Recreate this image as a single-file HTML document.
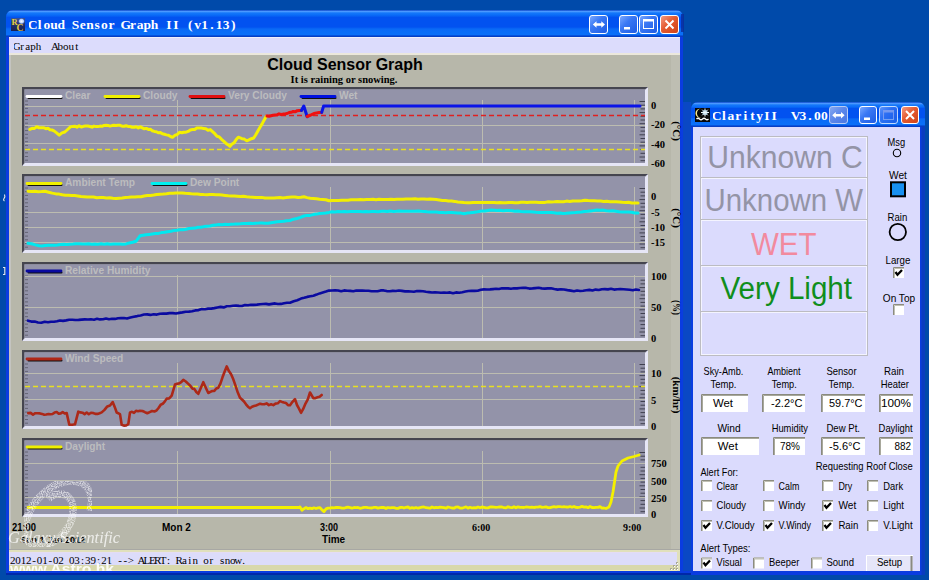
<!DOCTYPE html>
<html><head><meta charset="utf-8">
<style>
*{margin:0;padding:0;box-sizing:border-box}
html,body{width:929px;height:580px;overflow:hidden;background:#004AAA;font-family:"Liberation Sans",sans-serif}
.abs{position:absolute}
.win{position:absolute;background:#1158E6;border-radius:7px 7px 0 0}
.tb{position:absolute;border-radius:7px 7px 0 0;
 background:linear-gradient(to bottom,#1048C8 0px,#4A98FF 1.5px,#1478FA 3px,#0A6CF8 5px,#0252F0 7.5px,#0252F0 17px,#0A6AF6 19px,#0A70F8 24.5px,#0444D0 26px,#0838B8 27px)}
.tb2{background:linear-gradient(to bottom,#1048C8 0px,#4A98FF 1.5px,#1478FA 3px,#0A6CF8 5px,#0252F0 6.5px,#0252F0 15.5px,#0A6AF6 17px,#0A70F8 22.5px,#0444D0 24px,#0838B8 25px)}
.ttl{position:absolute;color:#fff;font-family:"Liberation Mono",monospace;font-weight:bold;white-space:pre;text-shadow:none}
.btn{position:absolute;width:19px;height:19px;border:1px solid #fff;border-radius:3px;
 background:linear-gradient(135deg,#7AA8FF 0%,#3A78F4 40%,#1E5CE4 100%)}
.btn.x{background:linear-gradient(135deg,#F49A82 0%,#E45A30 45%,#D04418 100%)}
.btn svg{position:absolute;left:0;top:0}
.lbl{position:absolute;font-size:11px;color:#000;white-space:pre;line-height:12px}
.fld{position:absolute;background:#fff;border-top:2px solid #8A8A80;border-left:2px solid #8A8A80;border-right:1px solid #F0F0F0;border-bottom:1px solid #F0F0F0;font-size:12px;line-height:15px;text-align:center;color:#000;white-space:pre}
.cb{position:absolute;width:11px;height:11px;background:#fff;border-top:2px solid #8E8E86;border-left:2px solid #8E8E86}
.cb.on::after{content:"";position:absolute;left:1px;top:0px;width:6px;height:3px;border-left:2px solid #000;border-bottom:2px solid #000;transform:rotate(-50deg);transform-origin:center}
.big{position:absolute;left:701px;width:167px;text-align:center;font-size:29px;white-space:pre}
</style></head><body>

<!-- Main window -->
<div class="win" style="left:6px;top:10px;width:677px;height:565px;background:linear-gradient(to bottom,#0A3CE0 0,#0A3CE0 563px,#0028A8 563px)"></div>
<div class="tb" style="left:6px;top:10px;width:677px;height:27px"></div>
<svg class="abs" style="left:11px;top:17.5px" width="14" height="13"><defs><linearGradient id="rcg" x1="0" y1="0" x2="0" y2="1"><stop offset="0" stop-color="#3A5498"/><stop offset="0.5" stop-color="#22306A"/><stop offset="1" stop-color="#1A2050"/></linearGradient><radialGradient id="rcw" cx="0.5" cy="0.5" r="0.5"><stop offset="0" stop-color="#FFFFFF"/><stop offset="0.6" stop-color="#B8D0FF"/><stop offset="1" stop-color="#5070C0" stop-opacity="0"/></radialGradient></defs><rect width="14" height="13" fill="url(#rcg)"/><rect x="7" y="0" width="7" height="6.5" fill="url(#rcw)"/><text x="0.5" y="7" font-family="Liberation Serif" font-weight="bold" font-size="8.5" fill="#E8D040">R</text><text x="5.5" y="12.8" font-family="Liberation Serif" font-weight="bold" font-size="9.5" fill="#E8D040">C</text></svg>
<svg class="abs" style="left:28.5px;top:14px" width="230" height="20"><text x="3.58 10.75 17.93 25.09 32.27 39.44 46.60 53.77 60.95 68.11 75.28 82.45 89.62 96.79 103.96 111.13 118.30 125.47 132.65 139.81 146.99 154.16 161.33 168.50 175.66 182.84 190.00 197.18 204.34" y="15" text-anchor="middle" xml:space="preserve" style="white-space:pre" font-family="Liberation Serif" font-weight="bold" font-size="13.5" fill="#fff">Cloud Sensor Graph II (v1.13)</text></svg>
<div class="btn" style="left:589px;top:15px"><svg width="17" height="17"><path d="M2.8 8.5 L6.5 5.3 V7.3 H11.3 V5.3 L15 8.5 L11.3 11.7 V9.7 H6.5 V11.7 Z" fill="#fff"/></svg></div>
<div class="btn" style="left:619px;top:15px"><svg width="17" height="17"><rect x="4" y="11" width="6" height="2.5" fill="#fff"/></svg></div>
<div class="btn" style="left:639px;top:15px"><svg width="17" height="17"><rect x="3.5" y="3.5" width="10" height="9" fill="none" stroke="#fff" stroke-width="1"/><rect x="3" y="3" width="11" height="2.5" fill="#fff"/></svg></div>
<div class="btn x" style="left:660px;top:15px"><svg width="17" height="17"><path d="M4.5 4.5 L12.5 12.5 M12.5 4.5 L4.5 12.5" stroke="#fff" stroke-width="2"/></svg></div>
<div class="abs" style="left:9px;top:37px;width:671px;height:534px;background:linear-gradient(to right,#C4C4C0 0,#C4C4C0 2px,#B7B7AA 2px,#B7B7AA 662px,#BEBEB2 662px)"></div>
<div class="abs" style="left:9px;top:37px;width:671px;height:18px;background:linear-gradient(to bottom,#F0F0FA 0,#F0F0FA 1px,#DCDCFC 1px,#DCDCFC 16.5px,#ECE8DC 16.5px)"></div>
<svg class="abs" style="left:13.5px;top:38px" width="80" height="16"><text x="2.73 8.18 13.62 19.08 24.53 29.98 35.43 40.88 46.33 51.78 57.23 62.68" y="11.5" text-anchor="middle" xml:space="preserve" style="white-space:pre" font-family="Liberation Serif" font-size="11" fill="#000">Graph  About</text></svg>
<div class="abs" style="left:9px;top:549px;width:671px;height:22px;background:linear-gradient(to bottom,#A8A8A4 0,#A8A8A4 1px,#E0E0BC 1px,#E0E0BC 3px,#ECDCF0 3px,#DCDCFA 4px,#DCDCFA 16px,#D8D8AC 16px,#D8D8AC 21px,#F0ECB4 21px)"></div>
<svg class="abs" style="left:10px;top:552px" width="260" height="16"><text x="2.69 8.05 13.43 18.79 24.16 29.54 34.91 40.28 45.65 51.02 56.39 61.76 67.12 72.50 77.87 83.23 88.61 93.98 99.34 104.72 110.09 115.45 120.83 126.20 131.56 136.94 142.31 147.68 153.05 158.41 163.78 169.16 174.53 179.90 185.27 190.64 196.00 201.38 206.75 212.12 217.49 222.86 228.22 233.59" y="11.7" text-anchor="middle" xml:space="preserve" style="white-space:pre" font-family="Liberation Serif" font-size="11" fill="#000">2012-01-02 03:39:21 --&gt; ALERT: Rain or snow.</text></svg>

<div class="abs" style="left:681px;top:14px;width:3px;height:18px;background:#0A2C98;opacity:.8"></div>
<div class="abs" style="left:677px;top:552px;width:3px;height:19px;background:#E0E0BC"></div>
<svg class="abs" style="left:0;top:0" width="929" height="580">
<rect x="22" y="87" width="626" height="79" fill="#9393A9"/>
<rect x="22" y="163" width="626" height="3" fill="#E6E6F6"/>
<rect x="645" y="87" width="3" height="79" fill="#E6E6F6"/>
<polygon points="22,87 648,87 645,90 25,90 25,163 22,166" fill="#A4A4B8"/>
<polygon points="22,87 648,87 645,89.3 24.3,89.3 24.3,163 22,166" fill="#45454F"/>
<line x1="177.5" y1="100" x2="177.5" y2="163" stroke="#BCBCB0" stroke-width="1"/>
<line x1="330.5" y1="100" x2="330.5" y2="163" stroke="#BCBCB0" stroke-width="1"/>
<line x1="482.5" y1="100" x2="482.5" y2="163" stroke="#BCBCB0" stroke-width="1"/>
<line x1="634.5" y1="100" x2="634.5" y2="163" stroke="#BCBCB0" stroke-width="1"/>
<line x1="25" y1="101.0" x2="28" y2="101.0" stroke="#585866" stroke-width="0.8"/>
<line x1="25" y1="104.7" x2="28" y2="104.7" stroke="#585866" stroke-width="0.8"/>
<line x1="25" y1="108.4" x2="28" y2="108.4" stroke="#585866" stroke-width="0.8"/>
<line x1="25" y1="112.1" x2="28" y2="112.1" stroke="#585866" stroke-width="0.8"/>
<line x1="25" y1="115.8" x2="28" y2="115.8" stroke="#585866" stroke-width="0.8"/>
<line x1="25" y1="119.5" x2="28" y2="119.5" stroke="#585866" stroke-width="0.8"/>
<line x1="25" y1="123.2" x2="28" y2="123.2" stroke="#585866" stroke-width="0.8"/>
<line x1="25" y1="126.9" x2="28" y2="126.9" stroke="#585866" stroke-width="0.8"/>
<line x1="25" y1="130.6" x2="28" y2="130.6" stroke="#585866" stroke-width="0.8"/>
<line x1="25" y1="134.3" x2="28" y2="134.3" stroke="#585866" stroke-width="0.8"/>
<line x1="25" y1="138.0" x2="28" y2="138.0" stroke="#585866" stroke-width="0.8"/>
<line x1="25" y1="141.7" x2="28" y2="141.7" stroke="#585866" stroke-width="0.8"/>
<line x1="25" y1="145.4" x2="28" y2="145.4" stroke="#585866" stroke-width="0.8"/>
<line x1="25" y1="149.1" x2="28" y2="149.1" stroke="#585866" stroke-width="0.8"/>
<line x1="25" y1="152.8" x2="28" y2="152.8" stroke="#585866" stroke-width="0.8"/>
<line x1="25" y1="156.5" x2="28" y2="156.5" stroke="#585866" stroke-width="0.8"/>
<line x1="25" y1="160.2" x2="28" y2="160.2" stroke="#585866" stroke-width="0.8"/>
<line x1="639.5" y1="101.5" x2="645" y2="101.5" stroke="#404050" stroke-width="1"/>
<line x1="640.5" y1="105.2" x2="645" y2="105.2" stroke="#404050" stroke-width="1"/>
<line x1="640.5" y1="108.9" x2="645" y2="108.9" stroke="#404050" stroke-width="1"/>
<line x1="639.5" y1="112.6" x2="645" y2="112.6" stroke="#404050" stroke-width="1"/>
<line x1="640.5" y1="116.3" x2="645" y2="116.3" stroke="#404050" stroke-width="1"/>
<line x1="640.5" y1="120.0" x2="645" y2="120.0" stroke="#404050" stroke-width="1"/>
<line x1="639.5" y1="123.7" x2="645" y2="123.7" stroke="#404050" stroke-width="1"/>
<line x1="640.5" y1="127.4" x2="645" y2="127.4" stroke="#404050" stroke-width="1"/>
<line x1="640.5" y1="131.1" x2="645" y2="131.1" stroke="#404050" stroke-width="1"/>
<line x1="639.5" y1="134.8" x2="645" y2="134.8" stroke="#404050" stroke-width="1"/>
<line x1="640.5" y1="138.5" x2="645" y2="138.5" stroke="#404050" stroke-width="1"/>
<line x1="640.5" y1="142.2" x2="645" y2="142.2" stroke="#404050" stroke-width="1"/>
<line x1="639.5" y1="145.9" x2="645" y2="145.9" stroke="#404050" stroke-width="1"/>
<line x1="640.5" y1="149.6" x2="645" y2="149.6" stroke="#404050" stroke-width="1"/>
<line x1="640.5" y1="153.3" x2="645" y2="153.3" stroke="#404050" stroke-width="1"/>
<line x1="639.5" y1="157.0" x2="645" y2="157.0" stroke="#404050" stroke-width="1"/>
<line x1="640.5" y1="160.7" x2="645" y2="160.7" stroke="#404050" stroke-width="1"/>
<rect x="22" y="174" width="626" height="79" fill="#9393A9"/>
<rect x="22" y="250" width="626" height="3" fill="#E6E6F6"/>
<rect x="645" y="174" width="3" height="79" fill="#E6E6F6"/>
<polygon points="22,174 648,174 645,177 25,177 25,250 22,253" fill="#A4A4B8"/>
<polygon points="22,174 648,174 645,176.3 24.3,176.3 24.3,250 22,253" fill="#45454F"/>
<line x1="177.5" y1="187" x2="177.5" y2="250" stroke="#BCBCB0" stroke-width="1"/>
<line x1="330.5" y1="187" x2="330.5" y2="250" stroke="#BCBCB0" stroke-width="1"/>
<line x1="482.5" y1="187" x2="482.5" y2="250" stroke="#BCBCB0" stroke-width="1"/>
<line x1="634.5" y1="187" x2="634.5" y2="250" stroke="#BCBCB0" stroke-width="1"/>
<line x1="25" y1="188.0" x2="28" y2="188.0" stroke="#585866" stroke-width="0.8"/>
<line x1="25" y1="191.7" x2="28" y2="191.7" stroke="#585866" stroke-width="0.8"/>
<line x1="25" y1="195.4" x2="28" y2="195.4" stroke="#585866" stroke-width="0.8"/>
<line x1="25" y1="199.1" x2="28" y2="199.1" stroke="#585866" stroke-width="0.8"/>
<line x1="25" y1="202.8" x2="28" y2="202.8" stroke="#585866" stroke-width="0.8"/>
<line x1="25" y1="206.5" x2="28" y2="206.5" stroke="#585866" stroke-width="0.8"/>
<line x1="25" y1="210.2" x2="28" y2="210.2" stroke="#585866" stroke-width="0.8"/>
<line x1="25" y1="213.9" x2="28" y2="213.9" stroke="#585866" stroke-width="0.8"/>
<line x1="25" y1="217.6" x2="28" y2="217.6" stroke="#585866" stroke-width="0.8"/>
<line x1="25" y1="221.3" x2="28" y2="221.3" stroke="#585866" stroke-width="0.8"/>
<line x1="25" y1="225.0" x2="28" y2="225.0" stroke="#585866" stroke-width="0.8"/>
<line x1="25" y1="228.7" x2="28" y2="228.7" stroke="#585866" stroke-width="0.8"/>
<line x1="25" y1="232.4" x2="28" y2="232.4" stroke="#585866" stroke-width="0.8"/>
<line x1="25" y1="236.1" x2="28" y2="236.1" stroke="#585866" stroke-width="0.8"/>
<line x1="25" y1="239.8" x2="28" y2="239.8" stroke="#585866" stroke-width="0.8"/>
<line x1="25" y1="243.5" x2="28" y2="243.5" stroke="#585866" stroke-width="0.8"/>
<line x1="25" y1="247.2" x2="28" y2="247.2" stroke="#585866" stroke-width="0.8"/>
<line x1="639.5" y1="188.5" x2="645" y2="188.5" stroke="#404050" stroke-width="1"/>
<line x1="640.5" y1="192.2" x2="645" y2="192.2" stroke="#404050" stroke-width="1"/>
<line x1="640.5" y1="195.9" x2="645" y2="195.9" stroke="#404050" stroke-width="1"/>
<line x1="639.5" y1="199.6" x2="645" y2="199.6" stroke="#404050" stroke-width="1"/>
<line x1="640.5" y1="203.3" x2="645" y2="203.3" stroke="#404050" stroke-width="1"/>
<line x1="640.5" y1="207.0" x2="645" y2="207.0" stroke="#404050" stroke-width="1"/>
<line x1="639.5" y1="210.7" x2="645" y2="210.7" stroke="#404050" stroke-width="1"/>
<line x1="640.5" y1="214.4" x2="645" y2="214.4" stroke="#404050" stroke-width="1"/>
<line x1="640.5" y1="218.1" x2="645" y2="218.1" stroke="#404050" stroke-width="1"/>
<line x1="639.5" y1="221.8" x2="645" y2="221.8" stroke="#404050" stroke-width="1"/>
<line x1="640.5" y1="225.5" x2="645" y2="225.5" stroke="#404050" stroke-width="1"/>
<line x1="640.5" y1="229.2" x2="645" y2="229.2" stroke="#404050" stroke-width="1"/>
<line x1="639.5" y1="232.9" x2="645" y2="232.9" stroke="#404050" stroke-width="1"/>
<line x1="640.5" y1="236.6" x2="645" y2="236.6" stroke="#404050" stroke-width="1"/>
<line x1="640.5" y1="240.3" x2="645" y2="240.3" stroke="#404050" stroke-width="1"/>
<line x1="639.5" y1="244.0" x2="645" y2="244.0" stroke="#404050" stroke-width="1"/>
<line x1="640.5" y1="247.7" x2="645" y2="247.7" stroke="#404050" stroke-width="1"/>
<rect x="22" y="262" width="626" height="79" fill="#9393A9"/>
<rect x="22" y="338" width="626" height="3" fill="#E6E6F6"/>
<rect x="645" y="262" width="3" height="79" fill="#E6E6F6"/>
<polygon points="22,262 648,262 645,265 25,265 25,338 22,341" fill="#A4A4B8"/>
<polygon points="22,262 648,262 645,264.3 24.3,264.3 24.3,338 22,341" fill="#45454F"/>
<line x1="177.5" y1="275" x2="177.5" y2="338" stroke="#BCBCB0" stroke-width="1"/>
<line x1="330.5" y1="275" x2="330.5" y2="338" stroke="#BCBCB0" stroke-width="1"/>
<line x1="482.5" y1="275" x2="482.5" y2="338" stroke="#BCBCB0" stroke-width="1"/>
<line x1="634.5" y1="275" x2="634.5" y2="338" stroke="#BCBCB0" stroke-width="1"/>
<line x1="25" y1="276.0" x2="28" y2="276.0" stroke="#585866" stroke-width="0.8"/>
<line x1="25" y1="279.7" x2="28" y2="279.7" stroke="#585866" stroke-width="0.8"/>
<line x1="25" y1="283.4" x2="28" y2="283.4" stroke="#585866" stroke-width="0.8"/>
<line x1="25" y1="287.1" x2="28" y2="287.1" stroke="#585866" stroke-width="0.8"/>
<line x1="25" y1="290.8" x2="28" y2="290.8" stroke="#585866" stroke-width="0.8"/>
<line x1="25" y1="294.5" x2="28" y2="294.5" stroke="#585866" stroke-width="0.8"/>
<line x1="25" y1="298.2" x2="28" y2="298.2" stroke="#585866" stroke-width="0.8"/>
<line x1="25" y1="301.9" x2="28" y2="301.9" stroke="#585866" stroke-width="0.8"/>
<line x1="25" y1="305.6" x2="28" y2="305.6" stroke="#585866" stroke-width="0.8"/>
<line x1="25" y1="309.3" x2="28" y2="309.3" stroke="#585866" stroke-width="0.8"/>
<line x1="25" y1="313.0" x2="28" y2="313.0" stroke="#585866" stroke-width="0.8"/>
<line x1="25" y1="316.7" x2="28" y2="316.7" stroke="#585866" stroke-width="0.8"/>
<line x1="25" y1="320.4" x2="28" y2="320.4" stroke="#585866" stroke-width="0.8"/>
<line x1="25" y1="324.1" x2="28" y2="324.1" stroke="#585866" stroke-width="0.8"/>
<line x1="25" y1="327.8" x2="28" y2="327.8" stroke="#585866" stroke-width="0.8"/>
<line x1="25" y1="331.5" x2="28" y2="331.5" stroke="#585866" stroke-width="0.8"/>
<line x1="25" y1="335.2" x2="28" y2="335.2" stroke="#585866" stroke-width="0.8"/>
<line x1="639.5" y1="276.5" x2="645" y2="276.5" stroke="#404050" stroke-width="1"/>
<line x1="640.5" y1="280.2" x2="645" y2="280.2" stroke="#404050" stroke-width="1"/>
<line x1="640.5" y1="283.9" x2="645" y2="283.9" stroke="#404050" stroke-width="1"/>
<line x1="639.5" y1="287.6" x2="645" y2="287.6" stroke="#404050" stroke-width="1"/>
<line x1="640.5" y1="291.3" x2="645" y2="291.3" stroke="#404050" stroke-width="1"/>
<line x1="640.5" y1="295.0" x2="645" y2="295.0" stroke="#404050" stroke-width="1"/>
<line x1="639.5" y1="298.7" x2="645" y2="298.7" stroke="#404050" stroke-width="1"/>
<line x1="640.5" y1="302.4" x2="645" y2="302.4" stroke="#404050" stroke-width="1"/>
<line x1="640.5" y1="306.1" x2="645" y2="306.1" stroke="#404050" stroke-width="1"/>
<line x1="639.5" y1="309.8" x2="645" y2="309.8" stroke="#404050" stroke-width="1"/>
<line x1="640.5" y1="313.5" x2="645" y2="313.5" stroke="#404050" stroke-width="1"/>
<line x1="640.5" y1="317.2" x2="645" y2="317.2" stroke="#404050" stroke-width="1"/>
<line x1="639.5" y1="320.9" x2="645" y2="320.9" stroke="#404050" stroke-width="1"/>
<line x1="640.5" y1="324.6" x2="645" y2="324.6" stroke="#404050" stroke-width="1"/>
<line x1="640.5" y1="328.3" x2="645" y2="328.3" stroke="#404050" stroke-width="1"/>
<line x1="639.5" y1="332.0" x2="645" y2="332.0" stroke="#404050" stroke-width="1"/>
<line x1="640.5" y1="335.7" x2="645" y2="335.7" stroke="#404050" stroke-width="1"/>
<rect x="22" y="350" width="626" height="79" fill="#9393A9"/>
<rect x="22" y="426" width="626" height="3" fill="#E6E6F6"/>
<rect x="645" y="350" width="3" height="79" fill="#E6E6F6"/>
<polygon points="22,350 648,350 645,353 25,353 25,426 22,429" fill="#A4A4B8"/>
<polygon points="22,350 648,350 645,352.3 24.3,352.3 24.3,426 22,429" fill="#45454F"/>
<line x1="177.5" y1="363" x2="177.5" y2="426" stroke="#BCBCB0" stroke-width="1"/>
<line x1="330.5" y1="363" x2="330.5" y2="426" stroke="#BCBCB0" stroke-width="1"/>
<line x1="482.5" y1="363" x2="482.5" y2="426" stroke="#BCBCB0" stroke-width="1"/>
<line x1="634.5" y1="363" x2="634.5" y2="426" stroke="#BCBCB0" stroke-width="1"/>
<line x1="25" y1="364.0" x2="28" y2="364.0" stroke="#585866" stroke-width="0.8"/>
<line x1="25" y1="367.7" x2="28" y2="367.7" stroke="#585866" stroke-width="0.8"/>
<line x1="25" y1="371.4" x2="28" y2="371.4" stroke="#585866" stroke-width="0.8"/>
<line x1="25" y1="375.1" x2="28" y2="375.1" stroke="#585866" stroke-width="0.8"/>
<line x1="25" y1="378.8" x2="28" y2="378.8" stroke="#585866" stroke-width="0.8"/>
<line x1="25" y1="382.5" x2="28" y2="382.5" stroke="#585866" stroke-width="0.8"/>
<line x1="25" y1="386.2" x2="28" y2="386.2" stroke="#585866" stroke-width="0.8"/>
<line x1="25" y1="389.9" x2="28" y2="389.9" stroke="#585866" stroke-width="0.8"/>
<line x1="25" y1="393.6" x2="28" y2="393.6" stroke="#585866" stroke-width="0.8"/>
<line x1="25" y1="397.3" x2="28" y2="397.3" stroke="#585866" stroke-width="0.8"/>
<line x1="25" y1="401.0" x2="28" y2="401.0" stroke="#585866" stroke-width="0.8"/>
<line x1="25" y1="404.7" x2="28" y2="404.7" stroke="#585866" stroke-width="0.8"/>
<line x1="25" y1="408.4" x2="28" y2="408.4" stroke="#585866" stroke-width="0.8"/>
<line x1="25" y1="412.1" x2="28" y2="412.1" stroke="#585866" stroke-width="0.8"/>
<line x1="25" y1="415.8" x2="28" y2="415.8" stroke="#585866" stroke-width="0.8"/>
<line x1="25" y1="419.5" x2="28" y2="419.5" stroke="#585866" stroke-width="0.8"/>
<line x1="25" y1="423.2" x2="28" y2="423.2" stroke="#585866" stroke-width="0.8"/>
<line x1="639.5" y1="364.5" x2="645" y2="364.5" stroke="#404050" stroke-width="1"/>
<line x1="640.5" y1="368.2" x2="645" y2="368.2" stroke="#404050" stroke-width="1"/>
<line x1="640.5" y1="371.9" x2="645" y2="371.9" stroke="#404050" stroke-width="1"/>
<line x1="639.5" y1="375.6" x2="645" y2="375.6" stroke="#404050" stroke-width="1"/>
<line x1="640.5" y1="379.3" x2="645" y2="379.3" stroke="#404050" stroke-width="1"/>
<line x1="640.5" y1="383.0" x2="645" y2="383.0" stroke="#404050" stroke-width="1"/>
<line x1="639.5" y1="386.7" x2="645" y2="386.7" stroke="#404050" stroke-width="1"/>
<line x1="640.5" y1="390.4" x2="645" y2="390.4" stroke="#404050" stroke-width="1"/>
<line x1="640.5" y1="394.1" x2="645" y2="394.1" stroke="#404050" stroke-width="1"/>
<line x1="639.5" y1="397.8" x2="645" y2="397.8" stroke="#404050" stroke-width="1"/>
<line x1="640.5" y1="401.5" x2="645" y2="401.5" stroke="#404050" stroke-width="1"/>
<line x1="640.5" y1="405.2" x2="645" y2="405.2" stroke="#404050" stroke-width="1"/>
<line x1="639.5" y1="408.9" x2="645" y2="408.9" stroke="#404050" stroke-width="1"/>
<line x1="640.5" y1="412.6" x2="645" y2="412.6" stroke="#404050" stroke-width="1"/>
<line x1="640.5" y1="416.3" x2="645" y2="416.3" stroke="#404050" stroke-width="1"/>
<line x1="639.5" y1="420.0" x2="645" y2="420.0" stroke="#404050" stroke-width="1"/>
<line x1="640.5" y1="423.7" x2="645" y2="423.7" stroke="#404050" stroke-width="1"/>
<rect x="22" y="438" width="626" height="79" fill="#9393A9"/>
<rect x="22" y="514" width="626" height="3" fill="#E6E6F6"/>
<rect x="645" y="438" width="3" height="79" fill="#E6E6F6"/>
<polygon points="22,438 648,438 645,441 25,441 25,514 22,517" fill="#A4A4B8"/>
<polygon points="22,438 648,438 645,440.3 24.3,440.3 24.3,514 22,517" fill="#45454F"/>
<line x1="177.5" y1="451" x2="177.5" y2="514" stroke="#BCBCB0" stroke-width="1"/>
<line x1="330.5" y1="451" x2="330.5" y2="514" stroke="#BCBCB0" stroke-width="1"/>
<line x1="482.5" y1="451" x2="482.5" y2="514" stroke="#BCBCB0" stroke-width="1"/>
<line x1="634.5" y1="451" x2="634.5" y2="514" stroke="#BCBCB0" stroke-width="1"/>
<line x1="25" y1="452.0" x2="28" y2="452.0" stroke="#585866" stroke-width="0.8"/>
<line x1="25" y1="455.7" x2="28" y2="455.7" stroke="#585866" stroke-width="0.8"/>
<line x1="25" y1="459.4" x2="28" y2="459.4" stroke="#585866" stroke-width="0.8"/>
<line x1="25" y1="463.1" x2="28" y2="463.1" stroke="#585866" stroke-width="0.8"/>
<line x1="25" y1="466.8" x2="28" y2="466.8" stroke="#585866" stroke-width="0.8"/>
<line x1="25" y1="470.5" x2="28" y2="470.5" stroke="#585866" stroke-width="0.8"/>
<line x1="25" y1="474.2" x2="28" y2="474.2" stroke="#585866" stroke-width="0.8"/>
<line x1="25" y1="477.9" x2="28" y2="477.9" stroke="#585866" stroke-width="0.8"/>
<line x1="25" y1="481.6" x2="28" y2="481.6" stroke="#585866" stroke-width="0.8"/>
<line x1="25" y1="485.3" x2="28" y2="485.3" stroke="#585866" stroke-width="0.8"/>
<line x1="25" y1="489.0" x2="28" y2="489.0" stroke="#585866" stroke-width="0.8"/>
<line x1="25" y1="492.7" x2="28" y2="492.7" stroke="#585866" stroke-width="0.8"/>
<line x1="25" y1="496.4" x2="28" y2="496.4" stroke="#585866" stroke-width="0.8"/>
<line x1="25" y1="500.1" x2="28" y2="500.1" stroke="#585866" stroke-width="0.8"/>
<line x1="25" y1="503.8" x2="28" y2="503.8" stroke="#585866" stroke-width="0.8"/>
<line x1="25" y1="507.5" x2="28" y2="507.5" stroke="#585866" stroke-width="0.8"/>
<line x1="25" y1="511.2" x2="28" y2="511.2" stroke="#585866" stroke-width="0.8"/>
<line x1="639.5" y1="452.5" x2="645" y2="452.5" stroke="#404050" stroke-width="1"/>
<line x1="640.5" y1="456.2" x2="645" y2="456.2" stroke="#404050" stroke-width="1"/>
<line x1="640.5" y1="459.9" x2="645" y2="459.9" stroke="#404050" stroke-width="1"/>
<line x1="639.5" y1="463.6" x2="645" y2="463.6" stroke="#404050" stroke-width="1"/>
<line x1="640.5" y1="467.3" x2="645" y2="467.3" stroke="#404050" stroke-width="1"/>
<line x1="640.5" y1="471.0" x2="645" y2="471.0" stroke="#404050" stroke-width="1"/>
<line x1="639.5" y1="474.7" x2="645" y2="474.7" stroke="#404050" stroke-width="1"/>
<line x1="640.5" y1="478.4" x2="645" y2="478.4" stroke="#404050" stroke-width="1"/>
<line x1="640.5" y1="482.1" x2="645" y2="482.1" stroke="#404050" stroke-width="1"/>
<line x1="639.5" y1="485.8" x2="645" y2="485.8" stroke="#404050" stroke-width="1"/>
<line x1="640.5" y1="489.5" x2="645" y2="489.5" stroke="#404050" stroke-width="1"/>
<line x1="640.5" y1="493.2" x2="645" y2="493.2" stroke="#404050" stroke-width="1"/>
<line x1="639.5" y1="496.9" x2="645" y2="496.9" stroke="#404050" stroke-width="1"/>
<line x1="640.5" y1="500.6" x2="645" y2="500.6" stroke="#404050" stroke-width="1"/>
<line x1="640.5" y1="504.3" x2="645" y2="504.3" stroke="#404050" stroke-width="1"/>
<line x1="639.5" y1="508.0" x2="645" y2="508.0" stroke="#404050" stroke-width="1"/>
<line x1="640.5" y1="511.7" x2="645" y2="511.7" stroke="#404050" stroke-width="1"/>
<line x1="25" y1="106.5" x2="645" y2="106.5" stroke="#BCBCB0" stroke-width="1"/>
<line x1="25" y1="125.5" x2="645" y2="125.5" stroke="#BCBCB0" stroke-width="1"/>
<line x1="25" y1="143.5" x2="645" y2="143.5" stroke="#BCBCB0" stroke-width="1"/>
<line x1="25" y1="115.5" x2="645" y2="115.5" stroke="#E02020" stroke-width="1.6" stroke-dasharray="5 3"/>
<line x1="25" y1="149.5" x2="645" y2="149.5" stroke="#E8E020" stroke-width="1.6" stroke-dasharray="5 3"/>
<line x1="28.5" y1="98.1" x2="61.5" y2="98.1" stroke="#111" stroke-width="2" stroke-linecap="round"/>
<line x1="27" y1="96.5" x2="61" y2="96.5" stroke="#FFFFFF" stroke-width="2.8" stroke-linecap="round"/>
<text x="65" y="99.3" font-family="Liberation Sans" font-weight="bold" font-size="10.2" fill="#BCBCBE">Clear</text>
<line x1="106.5" y1="98.1" x2="139.5" y2="98.1" stroke="#111" stroke-width="2" stroke-linecap="round"/>
<line x1="105" y1="96.5" x2="139" y2="96.5" stroke="#F0F000" stroke-width="2.8" stroke-linecap="round"/>
<text x="143" y="99.3" font-family="Liberation Sans" font-weight="bold" font-size="10.2" fill="#BCBCBE">Cloudy</text>
<line x1="191.5" y1="98.1" x2="224.5" y2="98.1" stroke="#111" stroke-width="2" stroke-linecap="round"/>
<line x1="190" y1="96.5" x2="224" y2="96.5" stroke="#E01010" stroke-width="2.8" stroke-linecap="round"/>
<text x="228" y="99.3" font-family="Liberation Sans" font-weight="bold" font-size="10.2" fill="#BCBCBE">Very Cloudy</text>
<line x1="302.5" y1="98.1" x2="335.5" y2="98.1" stroke="#111" stroke-width="2" stroke-linecap="round"/>
<line x1="301" y1="96.5" x2="335" y2="96.5" stroke="#0010E0" stroke-width="2.8" stroke-linecap="round"/>
<text x="339" y="99.3" font-family="Liberation Sans" font-weight="bold" font-size="10.2" fill="#BCBCBE">Wet</text>
<polyline points="29.8,129.3 32.1,128.3 34.5,128.4 36.8,126.7 39.0,127.8 41.3,127.8 43.5,127.7 45.8,128.7 48.0,128.3 50.0,129.7 52.0,130.0 54.0,130.8 56.6,132.9 59.2,135.1 62.0,132.9 64.8,132.0 67.6,129.5 70.4,126.9 72.6,126.4 74.8,126.2 76.9,127.2 79.1,125.7 81.3,127.1 83.5,126.3 85.6,126.1 87.8,126.1 90.0,126.5 92.0,127.2 94.0,126.1 96.0,126.6 98.0,126.6 100.0,126.1 102.0,126.3 104.0,125.4 106.0,125.3 108.0,125.4 110.0,126.1 112.0,125.6 114.0,125.3 116.0,125.6 118.0,125.3 120.0,125.3 122.1,126.2 124.1,126.3 126.1,125.7 128.1,126.4 130.2,126.5 132.2,127.3 134.2,127.2 136.2,126.7 138.3,128.0 140.3,126.8 142.3,127.8 144.3,128.8 146.3,128.4 148.3,129.4 150.3,129.2 152.3,130.8 154.3,131.4 156.3,131.7 158.3,132.8 160.4,132.6 162.4,133.8 164.4,134.3 166.4,134.9 168.5,135.3 170.5,136.5 172.5,137.3 174.8,135.4 177.2,134.5 179.5,132.3 181.7,132.8 183.8,132.2 186.0,132.2 188.2,131.4 190.3,130.0 192.5,129.6 194.7,129.5 196.8,128.0 199.0,128.1 201.3,128.1 203.5,128.4 205.8,128.7 208.0,130.2 210.3,129.6 212.5,131.6 214.8,133.7 217.0,136.3 219.3,136.9 221.5,139.3 223.6,141.1 225.8,143.2 227.9,144.7 230.0,146.4 232.0,144.0 234.0,142.9 236.2,139.6 238.3,137.2 242.0,138.7 244.3,139.1 246.7,140.8 249.0,139.8 251.4,138.7 253.7,138.0 255.8,134.8 257.9,131.0 260.0,127.2 262.1,123.9 264.2,119.9 266.3,116.2" fill="none" stroke="#F4F000" stroke-width="3" stroke-linejoin="round" stroke-linecap="round"/>
<polyline points="267.0,116.1 269.0,116.3 271.0,115.7 273.0,115.2 275.0,115.0 277.0,114.8 279.0,113.8 281.0,114.5 283.0,114.1 285.0,113.9 287.1,113.5 289.1,112.6 291.1,112.3 293.2,111.5 295.2,111.8 297.3,110.7 299.3,110.4 301.4,110.5" fill="none" stroke="#F01010" stroke-width="3" stroke-linejoin="round" stroke-linecap="round"/>
<polyline points="301.4,110.5 303.8,106 307.2,116.8" fill="none" stroke="#0A14E8" stroke-width="3" stroke-linejoin="round" stroke-linecap="round"/>
<polyline points="307.2,116.5 309.5,115.5 311.7,114.7 314.0,113.5 316.6,112.9 319.1,112.5 321.7,112.4" fill="none" stroke="#F01010" stroke-width="3" stroke-linejoin="round" stroke-linecap="round"/>
<polyline points="321.7,112.4 323.6,106 640,106" fill="none" stroke="#0A14E8" stroke-width="3" stroke-linejoin="round" stroke-linecap="round"/>
<text x="651" y="108.8" font-family="Liberation Serif" font-weight="bold" font-size="10.5" fill="#000">0</text>
<text x="651" y="128" font-family="Liberation Serif" font-weight="bold" font-size="10.5" fill="#000">-20</text>
<text x="651" y="147.5" font-family="Liberation Serif" font-weight="bold" font-size="10.5" fill="#000">-40</text>
<text x="651" y="167" font-family="Liberation Serif" font-weight="bold" font-size="10.5" fill="#000">-60</text>
<text x="0" y="0" transform="translate(672.5,131) rotate(90)" font-family="Liberation Serif" font-weight="bold" font-size="11" fill="#000" text-anchor="middle">(°C)</text>
<line x1="25" y1="212.5" x2="645" y2="212.5" stroke="#BCBCB0" stroke-width="1"/>
<line x1="25" y1="227.5" x2="645" y2="227.5" stroke="#BCBCB0" stroke-width="1"/>
<line x1="25" y1="242.5" x2="645" y2="242.5" stroke="#BCBCB0" stroke-width="1"/>
<line x1="28.5" y1="185.1" x2="61.5" y2="185.1" stroke="#111" stroke-width="2" stroke-linecap="round"/>
<line x1="27" y1="183.5" x2="61" y2="183.5" stroke="#F0F000" stroke-width="2.8" stroke-linecap="round"/>
<text x="65" y="186.3" font-family="Liberation Sans" font-weight="bold" font-size="10.2" fill="#BCBCBE">Ambient Temp</text>
<line x1="153.5" y1="185.1" x2="186.5" y2="185.1" stroke="#111" stroke-width="2" stroke-linecap="round"/>
<line x1="152" y1="183.5" x2="186" y2="183.5" stroke="#00F0F0" stroke-width="2.8" stroke-linecap="round"/>
<text x="190" y="186.3" font-family="Liberation Sans" font-weight="bold" font-size="10.2" fill="#BCBCBE">Dew Point</text>
<polyline points="28.0,191.3 31.4,191.4 34.8,191.2 38.2,191.7 41.6,191.6 45.0,191.3 48.7,192.2 52.3,193.1 56.0,193.9 59.1,194.1 62.2,194.8 65.3,195.2 68.4,195.2 71.6,195.5 74.7,195.6 77.8,195.9 80.9,196.4 84.0,196.7 87.2,197.1 90.4,196.9 93.6,197.0 96.8,197.7 100.0,197.6 103.2,197.5 106.4,197.9 109.6,197.7 112.8,198.2 116.0,198.6 119.1,198.3 122.2,198.0 125.4,197.5 128.5,197.3 131.6,197.0 134.8,197.1 137.9,196.7 141.0,196.7 144.2,196.0 147.3,195.5 150.5,195.4 153.7,195.1 156.8,194.6 160.0,194.2 163.2,194.0 166.4,193.7 169.6,193.2 172.8,193.2 176.0,192.9 179.1,192.9 182.1,193.0 185.2,193.3 188.3,193.4 191.4,193.8 194.4,194.1 197.5,194.0 200.6,194.4 203.6,194.6 206.7,194.7 209.8,194.5 212.9,194.5 215.9,194.7 219.0,194.8 222.1,195.0 225.1,195.4 228.2,195.8 231.2,196.0 234.3,195.9 237.4,196.2 240.4,196.5 243.5,196.3 246.6,196.8 249.6,197.1 252.7,197.2 255.8,197.4 258.8,197.4 261.9,197.4 264.9,198.0 268.0,197.9 271.0,198.1 274.0,198.1 277.0,197.7 280.0,197.6 283.0,197.9 286.0,197.6 289.0,197.2 292.0,197.1 295.0,197.0 298.0,197.4 301.0,197.3 304.0,196.8 307.1,197.6 310.2,198.2 313.4,198.4 316.5,198.7 319.6,199.2 322.8,199.4 325.9,199.8 329.0,200.8 332.2,200.5 335.3,200.4 338.5,200.5 341.6,200.2 344.8,200.3 347.9,200.2 351.1,199.8 354.2,199.7 357.4,199.7 360.5,199.6 363.7,199.7 366.8,199.4 370.0,199.5 373.0,199.3 376.0,199.7 379.0,199.3 382.0,199.4 385.0,199.4 388.0,199.6 391.0,199.3 394.0,199.6 397.0,199.3 400.0,199.3 403.0,199.2 406.0,198.9 409.0,199.1 412.0,199.0 415.0,198.8 418.0,199.3 421.0,198.9 424.0,199.0 427.0,199.2 430.0,199.0 433.1,199.2 436.2,199.6 439.3,200.0 442.4,200.4 445.5,200.4 448.5,200.9 451.6,201.1 454.7,201.4 457.8,202.0 460.9,202.2 464.0,202.5 467.0,202.7 470.0,202.7 473.0,202.5 476.0,202.6 479.0,202.5 482.0,202.5 485.0,202.6 488.0,202.5 491.0,202.5 494.0,202.5 497.0,202.8 500.0,202.6 503.0,202.7 506.0,202.8 509.0,202.4 512.0,202.5 515.0,202.8 518.0,202.7 521.0,202.3 524.0,202.3 527.0,202.5 530.0,202.2 533.0,202.3 536.0,202.2 539.1,202.5 542.1,202.4 545.2,202.4 548.2,201.8 551.3,202.0 554.4,201.8 557.4,201.4 560.5,201.7 563.6,201.7 566.6,201.1 569.7,201.4 572.8,200.9 575.8,200.9 578.9,201.0 581.9,200.8 585.0,200.3 588.1,200.6 591.2,200.8 594.4,200.8 597.5,200.9 600.6,201.1 603.7,201.5 606.8,201.2 609.9,201.7 613.1,201.8 616.2,201.7 619.3,202.0 622.4,202.3 625.5,202.4 628.6,202.3 631.8,203.0 634.9,203.0 638,203" fill="none" stroke="#F2EE00" stroke-width="3" stroke-linejoin="round" stroke-linecap="round"/>
<polyline points="28.0,243.3 31.7,243.8 35.3,244.9 39.0,245.7 42.1,246.0 45.2,245.5 48.3,245.2 51.4,245.2 54.5,245.3 57.5,245.1 60.6,244.6 63.7,244.3 66.8,244.6 69.9,244.2 73.0,244.1 76.1,243.8 79.2,243.7 82.4,244.1 85.5,244.0 88.6,243.7 91.7,244.3 94.8,244.1 97.9,244.2 101.1,243.8 104.2,244.2 107.3,243.7 110.4,244.2 113.5,244.0 116.6,243.9 119.8,244.0 122.9,244.3 126.0,243.9 129.3,242.9 132.7,242.3 136.0,241.3 140.0,235.8 143.1,235.3 146.2,234.8 149.2,234.4 152.3,234.0 155.4,233.6 158.5,233.4 161.5,232.6 164.6,232.3 167.7,231.7 170.8,231.3 173.8,230.6 176.9,230.3 180.0,229.7 183.0,229.7 186.0,229.2 189.0,228.5 192.0,228.3 195.0,228.1 198.0,227.2 201.0,227.2 204.0,226.6 207.0,226.2 210.0,226.0 213.0,225.3 216.0,224.9 219.0,224.6 222.1,224.7 225.1,224.2 228.2,224.4 231.2,224.2 234.3,224.1 237.4,223.9 240.4,223.8 243.5,223.5 246.6,223.4 249.6,223.3 252.7,223.6 255.8,223.2 258.8,223.1 261.9,222.9 264.9,223.3 268.0,223.2 271.1,222.7 274.3,222.2 277.4,221.8 280.6,221.4 283.7,221.2 286.9,220.7 290.0,220.5 293.5,219.2 297.0,218.5 300.5,217.4 304.0,216.0 307.1,215.4 310.2,215.4 313.3,214.6 316.4,214.1 319.6,213.5 322.7,213.3 325.8,212.9 328.9,212.4 332.0,211.8 335.1,212.0 338.1,211.6 341.2,211.7 344.3,211.6 347.4,211.8 350.4,211.5 353.5,211.5 356.6,211.6 359.7,211.5 362.7,211.7 365.8,211.6 368.9,211.7 372.0,211.6 375.0,211.6 378.1,211.7 381.2,211.3 384.3,211.3 387.3,211.6 390.4,211.1 393.5,211.4 396.6,211.3 399.6,210.9 402.7,211.3 405.8,211.3 408.9,211.2 411.9,211.2 415.0,211.2 418.1,210.9 421.1,211.3 424.2,211.5 427.2,211.8 430.3,212.0 433.4,212.1 436.4,212.1 439.5,212.5 442.6,212.5 445.6,212.7 448.7,212.6 451.8,212.6 454.8,212.8 457.9,213.1 460.9,213.1 464.0,213.7 467.0,213.1 470.0,212.8 473.0,212.4 476.0,212.1 479.0,211.5 482.0,210.9 485.0,211.0 488.0,210.5 491.0,210.0 494.0,210.2 497.0,210.4 500.0,210.2 503.0,210.7 506.0,210.6 509.0,210.6 512.0,210.8 515.0,211.3 518.0,211.1 521.0,211.5 524.0,211.8 527.0,211.7 530.0,211.7 533.0,211.9 536.0,212.2 539.0,212.4 542.0,212.5 545.0,212.6 548.0,212.4 551.0,212.6 554.0,212.8 557.0,213.2 560.0,213.1 563.0,213.4 566.0,213.2 569.1,212.9 572.2,212.7 575.3,212.6 578.4,212.3 581.5,212.0 584.5,211.5 587.6,211.3 590.7,210.9 593.8,210.6 596.9,210.1 600.0,210.2 603.2,210.1 606.3,210.8 609.5,211.0 612.7,210.7 615.8,211.2 619.0,211.7 622.2,212.0 625.3,212.0 628.5,212.1 631.7,212.3 634.8,213.0 638,213" fill="none" stroke="#00E8F0" stroke-width="3" stroke-linejoin="round" stroke-linecap="round"/>
<text x="651" y="200" font-family="Liberation Serif" font-weight="bold" font-size="10.5" fill="#000">0</text>
<text x="651" y="215.5" font-family="Liberation Serif" font-weight="bold" font-size="10.5" fill="#000">-5</text>
<text x="651" y="230.5" font-family="Liberation Serif" font-weight="bold" font-size="10.5" fill="#000">-10</text>
<text x="651" y="245.5" font-family="Liberation Serif" font-weight="bold" font-size="10.5" fill="#000">-15</text>
<text x="0" y="0" transform="translate(672.5,218) rotate(90)" font-family="Liberation Serif" font-weight="bold" font-size="11" fill="#000" text-anchor="middle">(°C)</text>
<line x1="25" y1="276.5" x2="645" y2="276.5" stroke="#BCBCB0" stroke-width="1"/>
<line x1="25" y1="307.5" x2="645" y2="307.5" stroke="#BCBCB0" stroke-width="1"/>
<line x1="28.5" y1="272.6" x2="61.5" y2="272.6" stroke="#111" stroke-width="2" stroke-linecap="round"/>
<line x1="27" y1="271" x2="61" y2="271" stroke="#0A0AA0" stroke-width="2.8" stroke-linecap="round"/>
<text x="65" y="273.8" font-family="Liberation Sans" font-weight="bold" font-size="10.2" fill="#BCBCBE">Relative Humidity</text>
<polyline points="28.0,320.7 31.3,321.6 34.7,321.6 38.0,322.5 41.3,322.8 44.7,321.8 48.0,322.3 51.0,321.7 54.0,321.8 57.0,321.3 60.0,320.5 63.0,320.9 66.1,320.4 69.2,319.8 72.3,319.7 75.4,320.0 78.6,319.9 81.7,319.6 84.8,319.4 87.9,319.5 91.0,319.3 94.0,319.7 97.0,318.8 100.0,319.4 103.0,319.3 106.0,318.5 109.0,319.2 112.0,318.8 115.0,318.9 118.0,318.2 121.0,318.1 124.0,318.0 127.0,318.5 130.4,317.5 133.8,316.7 137.2,316.1 140.6,315.4 144.0,314.5 147.2,314.4 150.4,314.9 153.6,314.2 156.8,314.6 160.0,313.7 163.2,313.6 166.4,313.6 169.6,313.1 172.8,313.1 176.0,313.5 179.2,312.9 182.4,312.4 185.7,311.8 188.9,311.6 192.1,311.2 195.3,310.4 198.6,310.1 201.8,309.0 205.0,309.2 208.1,308.6 211.2,308.6 214.3,308.1 217.4,307.5 220.6,306.9 223.7,307.4 226.8,306.3 229.9,306.3 233.0,305.8 236.0,305.6 239.0,305.9 242.0,306.0 245.0,305.1 248.0,305.3 251.0,304.8 254.0,304.9 257.0,304.6 260.0,304.2 263.0,304.0 266.0,303.9 269.0,304.4 272.0,303.9 275.0,303.4 278.0,304.0 281.0,303.9 284.0,303.2 287.0,302.8 290.0,302.7 293.7,301.3 297.3,300.2 301.0,298.6 304.1,297.8 307.2,296.9 310.3,296.3 313.4,295.7 316.6,294.6 319.7,293.4 322.8,292.5 325.9,291.6 329.0,290.6 332.0,290.5 335.1,290.3 338.1,290.5 341.2,291.2 344.2,290.4 347.2,290.8 350.3,290.9 353.3,291.2 356.3,290.5 359.4,290.6 362.4,290.6 365.5,290.7 368.5,290.8 371.5,291.3 374.6,291.2 377.6,291.3 380.7,290.4 383.7,290.4 386.7,291.1 389.8,291.3 392.8,290.9 395.8,291.0 398.9,290.5 401.9,290.9 405.0,291.4 408.0,291.3 411.0,291.5 414.0,291.7 417.0,291.1 420.0,291.1 423.0,291.3 426.0,291.8 429.0,292.1 432.0,292.5 435.0,292.4 438.0,292.5 441.0,292.7 444.0,292.6 447.0,292.8 450.0,292.4 453.0,293.3 456.1,292.4 459.2,292.8 462.3,292.2 465.4,291.5 468.5,291.0 471.5,290.8 474.6,290.9 477.7,290.7 480.8,289.7 483.9,289.4 487.0,289.5 490.0,289.4 493.0,289.1 496.0,288.8 499.0,289.0 502.0,288.3 505.0,288.4 508.0,288.4 511.0,288.8 514.0,288.3 517.0,288.4 520.1,288.0 523.2,287.8 526.3,287.9 529.4,288.6 532.5,288.4 535.5,288.1 538.6,287.8 541.7,288.4 544.8,288.6 547.9,288.4 551.0,288.3 554.3,289.0 557.6,289.6 560.9,289.3 564.1,289.5 567.4,290.1 570.7,290.6 574.0,291.2 577.1,290.5 580.2,291.0 583.2,290.7 586.3,290.3 589.4,289.9 592.5,290.5 595.6,289.6 598.7,290.0 601.8,289.2 604.8,289.1 607.9,289.4 611.0,288.8 614.1,289.6 617.2,289.2 620.3,289.0 623.4,289.2 626.6,289.5 629.7,289.8 632.8,290.2 635.9,289.5 639,290" fill="none" stroke="#0A0AA0" stroke-width="2.6" stroke-linejoin="round" stroke-linecap="round"/>
<text x="651" y="280" font-family="Liberation Serif" font-weight="bold" font-size="10.5" fill="#000">100</text>
<text x="651" y="311" font-family="Liberation Serif" font-weight="bold" font-size="10.5" fill="#000">50</text>
<text x="651" y="342" font-family="Liberation Serif" font-weight="bold" font-size="10.5" fill="#000">0</text>
<text x="-7.5" y="0" transform="translate(673,307.5) rotate(90)" font-family="Liberation Serif" font-weight="bold" font-size="11" fill="#000"  textLength="15" lengthAdjust="spacingAndGlyphs">(%)</text>
<line x1="25" y1="373.5" x2="645" y2="373.5" stroke="#BCBCB0" stroke-width="1"/>
<line x1="25" y1="399.5" x2="645" y2="399.5" stroke="#BCBCB0" stroke-width="1"/>
<line x1="25" y1="386.5" x2="645" y2="386.5" stroke="#E8E020" stroke-width="1.6" stroke-dasharray="5 3"/>
<line x1="28.5" y1="360.6" x2="61.5" y2="360.6" stroke="#111" stroke-width="2" stroke-linecap="round"/>
<line x1="27" y1="359" x2="61" y2="359" stroke="#B02818" stroke-width="2.8" stroke-linecap="round"/>
<text x="65" y="361.8" font-family="Liberation Sans" font-weight="bold" font-size="10.2" fill="#BCBCBE">Wind Speed</text>
<polyline points="28.3,413.1 30.6,412.9 33.0,414.6 35.3,413.2 37.7,413.2 40.0,413.4 42.1,413.9 44.2,414.7 46.3,414.5 48.4,414.0 50.4,414.3 52.5,414.0 54.6,412.6 56.7,412.1 58.7,413.7 60.7,413.4 62.7,412.1 64.7,413.5 66.7,413.1 69.3,424.7 72.2,424.7 75.0,424.3 78.3,411.7 80.4,412.4 82.5,412.7 84.6,414.1 86.7,412.5 88.8,414.2 91.0,412.7 93.1,413.0 95.3,413.9 97.4,413.9 99.6,413.2 101.7,412.4 104.5,409.9 107.3,406.4 110.0,405.5 112.7,402.1 114.7,406.9 116.7,412.5 120.0,414.1 121.7,424.8 123.9,425.6 126.1,425.5 128.3,424.1 130.0,412.4 132.0,411.8 134.0,412.8 136.0,410.8 138.0,411.2 140.0,410.8 142.5,411.0 145.0,412.2 147.3,413.2 149.7,412.1 152.0,411.0 154.4,411.5 156.7,410.3 158.7,407.8 160.7,404.7 162.7,403.8 164.7,401.6 166.7,398.6 169.2,398.4 171.7,395.7 175.0,384.5 177.1,383.7 179.2,383.4 181.2,382.2 183.3,379.8 185.8,381.5 188.3,383.9 190.3,385.8 192.3,388.6 194.3,388.9 196.3,392.0 198.3,393.8 200.8,388.1 203.3,382.2 205.8,387.7 208.3,393.0 210.3,391.9 212.3,391.0 214.3,390.9 216.3,388.5 218.3,387.7 220.4,383.6 222.5,377.3 224.6,371.7 226.7,366.4 228.9,371.1 231.1,374.3 233.3,379.3 235.5,385.7 237.8,392.6 240.0,397.8 242.0,399.5 244.0,401.5 246.0,404.3 248.0,406.7 250.0,408.2 252.0,406.8 254.0,406.1 256.0,405.5 258.0,404.6 260.0,403.8 262.2,404.3 264.4,404.2 266.6,403.4 268.9,405.1 271.1,404.3 273.3,405.1 275.5,403.6 277.8,403.3 280.0,401.1 282.0,401.9 284.0,402.5 286.0,403.0 288.0,405.1 290.0,405.2 292.5,401.8 295.0,399.1 297.0,405.0 299.0,408.6 301.0,412.8 303.2,408.9 305.5,403.6 307.8,399.3 310.0,392.5 313.3,398.2 315.4,398.1 317.5,397.3 319.6,396.7 321.7,395" fill="none" stroke="#AC2818" stroke-width="2.6" stroke-linejoin="round" stroke-linecap="round"/>
<text x="651" y="377" font-family="Liberation Serif" font-weight="bold" font-size="10.5" fill="#000">10</text>
<text x="651" y="403.5" font-family="Liberation Serif" font-weight="bold" font-size="10.5" fill="#000">5</text>
<text x="651" y="430" font-family="Liberation Serif" font-weight="bold" font-size="10.5" fill="#000">0</text>
<text x="0" y="0" transform="translate(672.5,395) rotate(90)" font-family="Liberation Serif" font-weight="bold" font-size="11" fill="#000" text-anchor="middle">(km/hr)</text>
<line x1="25" y1="463.5" x2="645" y2="463.5" stroke="#BCBCB0" stroke-width="1"/>
<line x1="25" y1="480.5" x2="645" y2="480.5" stroke="#BCBCB0" stroke-width="1"/>
<line x1="25" y1="497.5" x2="645" y2="497.5" stroke="#BCBCB0" stroke-width="1"/>
<line x1="28.5" y1="448.6" x2="61.5" y2="448.6" stroke="#111" stroke-width="2" stroke-linecap="round"/>
<line x1="27" y1="447" x2="61" y2="447" stroke="#F0F000" stroke-width="2.8" stroke-linecap="round"/>
<text x="65" y="449.8" font-family="Liberation Sans" font-weight="bold" font-size="10.2" fill="#BCBCBE">Daylight</text>
<polyline points="28,507.5 300,507.5 300.0,506.9 302.0,510.2 304.0,508.7 306.0,507.6 308.0,508.7 310.0,508.1 312.0,508.6 314.0,507.8 316.0,508.5 318.0,507.9 320.0,507.7 322.0,509.9 324.0,511.6 326.0,508.9 328.0,508.1 330.0,508.2 332.0,507.6 334.0,507.8 336.0,507.5 338.0,507.5 340.0,507.6 342.0,508.1 344.0,508.2 346.0,507.5 348.0,507.2 350.0,507.7 352.0,508.2 354.0,507.5 356.0,507.6 358.0,507.5 360.0,508.3 362.0,507.9 364.0,507.3 366.0,507.3 368.0,507.7 370.0,507.9 372.0,508.0 374.0,507.3 376.0,507.4 378.0,508.1 380.0,507.7 382.0,507.5 384.0,507.5 386.0,508.4 388.0,507.5 390.0,507.9 392.0,507.6 394.0,507.6 396.0,508.3 398.0,508.4 400.0,507.5 402.0,507.3 404.0,508.0 406.0,507.3 408.0,507.0 410.0,508.3 412.0,507.6 414.0,508.1 416.0,507.5 418.0,508.2 420.0,507.6 422.0,507.2 424.0,507.0 426.0,507.7 428.0,507.8 430.0,508.2 432.0,507.0 434.0,507.8 436.0,507.4 438.0,507.6 440.0,507.1 442.0,507.3 444.0,507.6 446.0,508.2 448.0,507.0 450.0,507.5 452.0,508.0 454.0,508.2 456.0,507.1 458.0,507.0 460.0,508.1 462.0,508.2 464.0,507.5 466.0,506.9 468.0,508.1 470.0,507.3 472.0,508.0 474.0,507.6 476.0,507.9 478.0,507.0 480.0,507.8 482.0,507.0 484.0,507.3 486.0,507.9 488.0,507.9 490.0,507.0 492.0,507.0 494.0,507.2 496.0,507.4 498.0,507.2 500.0,506.8 502.0,507.0 504.0,507.7 506.0,507.9 508.0,506.7 510.0,507.4 512.0,507.7 514.0,506.7 516.0,507.8 518.0,506.8 520.0,507.4 522.0,507.4 524.0,507.5 526.0,507.0 528.0,507.2 530.0,507.4 532.0,507.1 534.0,507.5 536.0,507.2 538.0,507.1 540.0,506.6 542.0,507.4 544.0,507.2 546.0,506.8 548.0,507.6 550.0,507.6 552.0,507.1 554.0,506.7 556.0,507.1 558.0,506.6 560.0,506.6 562.0,507.0 564.0,506.6 566.0,507.0 568.0,507.1 570.0,506.5 572.0,507.3 574.0,506.5 576.0,507.4 578.0,507.5 580.0,507.1 582.0,506.4 584.0,507.1 586.0,506.9 588.0,507.7 590.0,506.5 592.0,507.5 594.0,507.7 596.0,507.3 598.0,507.4 600.0,506.6 602.0,508.2 604.0,508.0 606,508.5 609,507 611,502 613,492 614.5,482 616,472 618,466 622,461 628,458 634,456.5 639,455" fill="none" stroke="#F4F000" stroke-width="2.8" stroke-linejoin="round" stroke-linecap="round"/>
<text x="651" y="467" font-family="Liberation Serif" font-weight="bold" font-size="10.5" fill="#000">750</text>
<text x="651" y="484.5" font-family="Liberation Serif" font-weight="bold" font-size="10.5" fill="#000">500</text>
<text x="651" y="501.5" font-family="Liberation Serif" font-weight="bold" font-size="10.5" fill="#000">250</text>
<text x="651" y="518" font-family="Liberation Serif" font-weight="bold" font-size="10.5" fill="#000">0</text>
<text x="12" y="531" font-family="Liberation Sans" font-weight="bold" font-size="10" fill="#000" textLength="24" lengthAdjust="spacingAndGlyphs">21:00</text>
<text x="162" y="531" font-family="Liberation Sans" font-weight="bold" font-size="10" fill="#000">Mon 2</text>
<text x="320" y="531" font-family="Liberation Sans" font-weight="bold" font-size="10" fill="#000" textLength="18" lengthAdjust="spacingAndGlyphs">3:00</text>
<text x="472" y="531" font-family="Liberation Serif" font-weight="bold" font-size="10" fill="#000">6:00</text>
<text x="623" y="531" font-family="Liberation Serif" font-weight="bold" font-size="10" fill="#000">9:00</text>
<text x="20" y="543" font-family="Liberation Sans" font-weight="bold" font-size="9" fill="#000">Sun 1 Jan 2012</text>
<text x="322" y="543" font-family="Liberation Sans" font-weight="bold" font-size="10" fill="#000">Time</text>
<text x="345" y="70" text-anchor="middle" font-family="Liberation Sans" font-weight="bold" font-size="16" fill="#000">Cloud Sensor Graph</text>
<text x="344" y="83" text-anchor="middle" font-family="Liberation Serif" font-weight="bold" font-size="10.5" fill="#000">It is raining or snowing.</text>
<defs><filter id="spk" x="0" y="0" width="1" height="1"><feTurbulence type="fractalNoise" baseFrequency="0.8" numOctaves="1" seed="3" result="n"/><feColorMatrix in="n" type="matrix" values="0 0 0 0 1  0 0 0 0 1  0 0 0 0 1  0 0 0 3.2 -1.1" result="m"/><feComposite in="SourceGraphic" in2="m" operator="in"/></filter></defs>
<g filter="url(#spk)"><g opacity="0.6" fill="none" stroke="#FFFFFF">
<path d="M90 511 C95 495 88 481 72 481 C55 481 36 495 28 515 C20 535 28 548 42 546 C58 543 72 528 73 512 C74 500 68 494 60 494 C54 494 50 497 48 499" stroke-width="7.5"/>
</g></g>
<text x="8" y="543" textLength="112" lengthAdjust="spacingAndGlyphs" font-family="Liberation Serif" font-style="italic" font-size="16" fill="#FFFFFF" opacity="0.75">Galaxy Scientific</text>
<svg x="0" y="0" width="929" height="571"><text x="10" y="573.5" textLength="104" lengthAdjust="spacingAndGlyphs" font-family="Liberation Sans" font-weight="bold" font-size="15" fill="#FFFFFF" opacity="0.9">www.Astro.hk</text></svg>
<rect x="676" y="562" width="2" height="2" fill="#A8A894"/>
<rect x="677" y="563" width="1" height="1" fill="#FFFFFF"/>
<rect x="673" y="565" width="2" height="2" fill="#A8A894"/>
<rect x="674" y="566" width="1" height="1" fill="#FFFFFF"/>
<rect x="676" y="565" width="2" height="2" fill="#A8A894"/>
<rect x="677" y="566" width="1" height="1" fill="#FFFFFF"/>
<rect x="670" y="568" width="2" height="2" fill="#A8A894"/>
<rect x="671" y="569" width="1" height="1" fill="#FFFFFF"/>
<rect x="673" y="568" width="2" height="2" fill="#A8A894"/>
<rect x="674" y="569" width="1" height="1" fill="#FFFFFF"/>
<rect x="676" y="568" width="2" height="2" fill="#A8A894"/>
<rect x="677" y="569" width="1" height="1" fill="#FFFFFF"/>
<path d="M4.5 194.5 Q5.5 197 4 198.5 Q3 200 4.5 201" fill="none" stroke="#E8E8F0" stroke-width="1.1"/>
<path d="M3 267.5 H4.8 V274.5 H3" fill="none" stroke="#E8E8F0" stroke-width="1.1"/>
</svg>

<div class="abs" style="left:683px;top:102px;width:8px;height:473px;background:linear-gradient(to bottom,#0A48C4 0,#0A48C4 469px,#0A3CE0 469px,#0A3CE0 471.5px,#0028A8 471.5px)"></div>
<!-- Clarity window -->
<div class="win" style="left:691px;top:102px;width:234px;height:473px;background:linear-gradient(to right,#0A3CE0 0,#0A3CE0 230px,#0A3CC0 231px)"></div>
<div class="tb tb2" style="left:691px;top:102px;width:234px;height:25px"></div>
<svg class="abs" style="left:695px;top:108px" width="15" height="14"><rect width="15" height="14" fill="#080808"/><path d="M6 0.8 A4.6 4.6 0 1 0 6 9.8 A3.4 3.8 0 1 1 6 0.8 Z" fill="#F4E890"/><circle cx="10" cy="4.5" r="2.6" fill="#A8E0FF" opacity=".8"/><path d="M10 0.5 V8.5 M6 4.5 H14 M7.2 1.7 L12.8 7.3 M12.8 1.7 L7.2 7.3" stroke="#F0FAFF" stroke-width="1"/><path d="M1.5 11 Q3 9.5 4.5 11 T7.5 11 T10.5 11 T13.5 11" fill="none" stroke="#fff" stroke-width="1.3"/></svg>
<svg class="abs" style="left:713px;top:106px" width="120" height="20"><text x="3.60 10.79 17.98 25.16 32.36 39.55 46.73 53.93 61.12 68.31 75.50 82.69 89.88 97.06 104.26 111.45" y="14.3" text-anchor="middle" xml:space="preserve" style="white-space:pre" font-family="Liberation Serif" font-weight="bold" font-size="13.5" fill="#fff">ClarityII  V3.00</text></svg>
<div class="btn" style="left:829px;top:106px;width:19px;height:18px;border-color:#B8CCF4;background:linear-gradient(135deg,#86A8F0 0%,#5A86EA 50%,#4A78E4 100%)"><svg width="17" height="16"><path d="M2.2 8.2 L5.8 5 V7 H11 V5 L14.6 8.2 L11 11.4 V9.4 H5.8 V11.4 Z" fill="#fff"/></svg></div>
<div class="btn" style="left:859px;top:106px;width:18px;height:18px"><svg width="16" height="16"><rect x="4" y="10.5" width="6" height="2.5" fill="#fff"/></svg></div>
<div class="btn" style="left:879px;top:106px;width:19px;height:18px;opacity:.75"><svg width="17" height="16"><rect x="3.5" y="3.5" width="10" height="9" fill="none" stroke="#9AB0F0" stroke-width="1"/><rect x="3" y="3" width="11" height="2.5" fill="#9AB0F0"/></svg></div>
<div class="btn x" style="left:901px;top:106px;width:18px;height:18px"><svg width="16" height="16"><path d="M4 4 L12 12 M12 4 L4 12" stroke="#fff" stroke-width="2"/></svg></div>
<div class="abs" style="left:693px;top:127px;width:227px;height:444px;background:#DBDBFD"></div>

<svg class="abs" style="left:0;top:0" width="929" height="580">
<rect x="700.5" y="136.5" width="167" height="219" fill="none" stroke="#BCBCC2" stroke-width="1"/>
<rect x="701.5" y="137.5" width="165" height="217" fill="none" stroke="#F4F4FF" stroke-width="1"/>
<line x1="701" y1="177.5" x2="867" y2="177.5" stroke="#BCBCC2"/>
<line x1="701" y1="178.5" x2="867" y2="178.5" stroke="#F4F4FF"/>
<line x1="701" y1="219.5" x2="867" y2="219.5" stroke="#BCBCC2"/>
<line x1="701" y1="220.5" x2="867" y2="220.5" stroke="#F4F4FF"/>
<line x1="701" y1="265.5" x2="867" y2="265.5" stroke="#BCBCC2"/>
<line x1="701" y1="266.5" x2="867" y2="266.5" stroke="#F4F4FF"/>
<line x1="701" y1="311.5" x2="867" y2="311.5" stroke="#BCBCC2"/>
<line x1="701" y1="312.5" x2="867" y2="312.5" stroke="#F4F4FF"/>
<text x="707.3" y="167.8" textLength="155.5" lengthAdjust="spacingAndGlyphs" font-family="Liberation Sans" font-size="31" fill="#9494A6">Unknown C</text>
<text x="704.5" y="211.3" textLength="158.5" lengthAdjust="spacingAndGlyphs" font-family="Liberation Sans" font-size="31" fill="#9494A6">Unknown W</text>
<text x="751" y="254.5" textLength="65.5" lengthAdjust="spacingAndGlyphs" font-family="Liberation Sans" font-size="30.5" fill="#F28A9E">WET</text>
<text x="720.5" y="299.3" textLength="131.5" lengthAdjust="spacingAndGlyphs" font-family="Liberation Sans" font-size="31" fill="#108E1C">Very Light</text>
<text x="887.6" y="145.5" textLength="17.6" lengthAdjust="spacingAndGlyphs" font-family="Liberation Sans" font-size="10.5" fill="#000">Msg</text>
<circle cx="897" cy="153" r="3.7" fill="none" stroke="#000" stroke-width="1.1"/>
<text x="889" y="178.7" textLength="17.9" lengthAdjust="spacingAndGlyphs" font-family="Liberation Sans" font-size="10.5" fill="#000">Wet</text>
<rect x="891" y="182.3" width="14" height="14" fill="#1890F0" stroke="#000" stroke-width="2"/>
<text x="887.6" y="220.5" textLength="19.7" lengthAdjust="spacingAndGlyphs" font-family="Liberation Sans" font-size="10.5" fill="#000">Rain</text>
<circle cx="897.8" cy="232" r="8.2" fill="none" stroke="#000" stroke-width="1.8"/>
<text x="885.5" y="263.6" textLength="24.9" lengthAdjust="spacingAndGlyphs" font-family="Liberation Sans" font-size="10.5" fill="#000">Large</text>
<text x="882.8" y="302" textLength="32.3" lengthAdjust="spacingAndGlyphs" font-family="Liberation Sans" font-size="10.5" fill="#000">On Top</text>
<text x="703.6" y="374.7" textLength="39.7" lengthAdjust="spacingAndGlyphs" font-family="Liberation Sans" font-size="10.5" fill="#000">Sky-Amb.</text>
<text x="710.5" y="387.6" textLength="25.9" lengthAdjust="spacingAndGlyphs" font-family="Liberation Sans" font-size="10.5" fill="#000">Temp.</text>
<text x="767.4" y="374.7" textLength="33.1" lengthAdjust="spacingAndGlyphs" font-family="Liberation Sans" font-size="10.5" fill="#000">Ambient</text>
<text x="771.7" y="387.6" textLength="25" lengthAdjust="spacingAndGlyphs" font-family="Liberation Sans" font-size="10.5" fill="#000">Temp.</text>
<text x="826.4" y="374.7" textLength="30.2" lengthAdjust="spacingAndGlyphs" font-family="Liberation Sans" font-size="10.5" fill="#000">Sensor</text>
<text x="828.6" y="387.6" textLength="25.9" lengthAdjust="spacingAndGlyphs" font-family="Liberation Sans" font-size="10.5" fill="#000">Temp.</text>
<text x="884" y="374.7" textLength="20" lengthAdjust="spacingAndGlyphs" font-family="Liberation Sans" font-size="10.5" fill="#000">Rain</text>
<text x="880.7" y="387.6" textLength="28.3" lengthAdjust="spacingAndGlyphs" font-family="Liberation Sans" font-size="10.5" fill="#000">Heater</text>
<text x="717.4" y="431.6" textLength="23.3" lengthAdjust="spacingAndGlyphs" font-family="Liberation Sans" font-size="10.5" fill="#000">Wind</text>
<text x="771.7" y="431.6" textLength="36.3" lengthAdjust="spacingAndGlyphs" font-family="Liberation Sans" font-size="10.5" fill="#000">Humidity</text>
<text x="826.4" y="431.6" textLength="33.6" lengthAdjust="spacingAndGlyphs" font-family="Liberation Sans" font-size="10.5" fill="#000">Dew Pt.</text>
<text x="878.6" y="431.6" textLength="34" lengthAdjust="spacingAndGlyphs" font-family="Liberation Sans" font-size="10.5" fill="#000">Daylight</text>
<text x="815.8" y="470.1" textLength="97" lengthAdjust="spacingAndGlyphs" font-family="Liberation Sans" font-size="10.5" fill="#000">Requesting Roof Close</text>
<text x="700.4" y="475.5" textLength="37.7" lengthAdjust="spacingAndGlyphs" font-family="Liberation Sans" font-size="10.5" fill="#000">Alert For:</text>
<text x="700.3" y="552.3" textLength="50.2" lengthAdjust="spacingAndGlyphs" font-family="Liberation Sans" font-size="10.5" fill="#000">Alert Types:</text>
<rect x="701" y="394" width="47" height="18" fill="#FFFFFF"/>
<path d="M701.5 412 V394.5 H748" fill="none" stroke="#8A8A7E" stroke-width="1"/>
<path d="M702.5 412 V395.5 H748" fill="none" stroke="#A8A89C" stroke-width="1"/>
<text x="713" y="407" textLength="20" lengthAdjust="spacingAndGlyphs" font-family="Liberation Sans" font-size="11.5" fill="#000">Wet</text>
<rect x="762" y="394" width="43" height="18" fill="#FFFFFF"/>
<path d="M762.5 412 V394.5 H805" fill="none" stroke="#8A8A7E" stroke-width="1"/>
<path d="M763.5 412 V395.5 H805" fill="none" stroke="#A8A89C" stroke-width="1"/>
<text x="771" y="407" textLength="31.5" lengthAdjust="spacingAndGlyphs" font-family="Liberation Sans" font-size="11.5" fill="#000">-2.2°C</text>
<rect x="821" y="394" width="44" height="18" fill="#FFFFFF"/>
<path d="M821.5 412 V394.5 H865" fill="none" stroke="#8A8A7E" stroke-width="1"/>
<path d="M822.5 412 V395.5 H865" fill="none" stroke="#A8A89C" stroke-width="1"/>
<text x="829" y="407" textLength="33.5" lengthAdjust="spacingAndGlyphs" font-family="Liberation Sans" font-size="11.5" fill="#000">59.7°C</text>
<rect x="879" y="394" width="34" height="18" fill="#FFFFFF"/>
<path d="M879.5 412 V394.5 H913" fill="none" stroke="#8A8A7E" stroke-width="1"/>
<path d="M880.5 412 V395.5 H913" fill="none" stroke="#A8A89C" stroke-width="1"/>
<text x="881" y="407" textLength="30" lengthAdjust="spacingAndGlyphs" font-family="Liberation Sans" font-size="11.5" fill="#000">100%</text>
<rect x="701" y="437" width="58" height="18" fill="#FFFFFF"/>
<path d="M701.5 455 V437.5 H759" fill="none" stroke="#8A8A7E" stroke-width="1"/>
<path d="M702.5 455 V438.5 H759" fill="none" stroke="#A8A89C" stroke-width="1"/>
<text x="717.8" y="450" textLength="20" lengthAdjust="spacingAndGlyphs" font-family="Liberation Sans" font-size="11.5" fill="#000">Wet</text>
<rect x="773" y="437" width="32" height="18" fill="#FFFFFF"/>
<path d="M773.5 455 V437.5 H805" fill="none" stroke="#8A8A7E" stroke-width="1"/>
<path d="M774.5 455 V438.5 H805" fill="none" stroke="#A8A89C" stroke-width="1"/>
<text x="780" y="450" textLength="20" lengthAdjust="spacingAndGlyphs" font-family="Liberation Sans" font-size="11.5" fill="#000">78%</text>
<rect x="821" y="437" width="44" height="18" fill="#FFFFFF"/>
<path d="M821.5 455 V437.5 H865" fill="none" stroke="#8A8A7E" stroke-width="1"/>
<path d="M822.5 455 V438.5 H865" fill="none" stroke="#A8A89C" stroke-width="1"/>
<text x="829" y="450" textLength="31.5" lengthAdjust="spacingAndGlyphs" font-family="Liberation Sans" font-size="11.5" fill="#000">-5.6°C</text>
<rect x="879" y="437" width="34" height="18" fill="#FFFFFF"/>
<path d="M879.5 455 V437.5 H913" fill="none" stroke="#8A8A7E" stroke-width="1"/>
<path d="M880.5 455 V438.5 H913" fill="none" stroke="#A8A89C" stroke-width="1"/>
<text x="894.5" y="450" textLength="16.5" lengthAdjust="spacingAndGlyphs" font-family="Liberation Sans" font-size="11.5" fill="#000">882</text>
<rect x="701" y="480" width="11" height="11" fill="#FFFFFF"/>
<path d="M701.5 491 V480.5 H712" fill="none" stroke="#8C8C80" stroke-width="1"/>
<path d="M702.5 491 V481.5 H712" fill="none" stroke="#C0C0B4" stroke-width="1"/>
<text x="716.6" y="489.6" textLength="21.5" lengthAdjust="spacingAndGlyphs" font-family="Liberation Sans" font-size="10.5" fill="#000">Clear</text>
<rect x="763" y="480" width="11" height="11" fill="#FFFFFF"/>
<path d="M763.5 491 V480.5 H774" fill="none" stroke="#8C8C80" stroke-width="1"/>
<path d="M764.5 491 V481.5 H774" fill="none" stroke="#C0C0B4" stroke-width="1"/>
<text x="778.6" y="489.6" textLength="20.7" lengthAdjust="spacingAndGlyphs" font-family="Liberation Sans" font-size="10.5" fill="#000">Calm</text>
<rect x="822" y="480" width="11" height="11" fill="#FFFFFF"/>
<path d="M822.5 491 V480.5 H833" fill="none" stroke="#8C8C80" stroke-width="1"/>
<path d="M823.5 491 V481.5 H833" fill="none" stroke="#C0C0B4" stroke-width="1"/>
<text x="838.4" y="489.6" textLength="13.8" lengthAdjust="spacingAndGlyphs" font-family="Liberation Sans" font-size="10.5" fill="#000">Dry</text>
<rect x="867" y="480" width="11" height="11" fill="#FFFFFF"/>
<path d="M867.5 491 V480.5 H878" fill="none" stroke="#8C8C80" stroke-width="1"/>
<path d="M868.5 491 V481.5 H878" fill="none" stroke="#C0C0B4" stroke-width="1"/>
<text x="883.3" y="489.6" textLength="19.8" lengthAdjust="spacingAndGlyphs" font-family="Liberation Sans" font-size="10.5" fill="#000">Dark</text>
<rect x="701" y="500" width="11" height="11" fill="#FFFFFF"/>
<path d="M701.5 511 V500.5 H712" fill="none" stroke="#8C8C80" stroke-width="1"/>
<path d="M702.5 511 V501.5 H712" fill="none" stroke="#C0C0B4" stroke-width="1"/>
<text x="716.6" y="509.1" textLength="29.3" lengthAdjust="spacingAndGlyphs" font-family="Liberation Sans" font-size="10.5" fill="#000">Cloudy</text>
<rect x="763" y="500" width="11" height="11" fill="#FFFFFF"/>
<path d="M763.5 511 V500.5 H774" fill="none" stroke="#8C8C80" stroke-width="1"/>
<path d="M764.5 511 V501.5 H774" fill="none" stroke="#C0C0B4" stroke-width="1"/>
<text x="778.6" y="509.1" textLength="26.7" lengthAdjust="spacingAndGlyphs" font-family="Liberation Sans" font-size="10.5" fill="#000">Windy</text>
<rect x="822" y="500" width="11" height="11" fill="#FFFFFF"/>
<path d="M822.5 511 V500.5 H833" fill="none" stroke="#8C8C80" stroke-width="1"/>
<path d="M823.5 511 V501.5 H833" fill="none" stroke="#C0C0B4" stroke-width="1"/>
<path d="M824.5 505 L826.5 507.8 L831 503" fill="none" stroke="#000" stroke-width="2.3"/>
<text x="838.4" y="509.1" textLength="17.8" lengthAdjust="spacingAndGlyphs" font-family="Liberation Sans" font-size="10.5" fill="#000">Wet</text>
<rect x="867" y="500" width="11" height="11" fill="#FFFFFF"/>
<path d="M867.5 511 V500.5 H878" fill="none" stroke="#8C8C80" stroke-width="1"/>
<path d="M868.5 511 V501.5 H878" fill="none" stroke="#C0C0B4" stroke-width="1"/>
<text x="883.3" y="509.1" textLength="20.7" lengthAdjust="spacingAndGlyphs" font-family="Liberation Sans" font-size="10.5" fill="#000">Light</text>
<rect x="701" y="520" width="11" height="11" fill="#FFFFFF"/>
<path d="M701.5 531 V520.5 H712" fill="none" stroke="#8C8C80" stroke-width="1"/>
<path d="M702.5 531 V521.5 H712" fill="none" stroke="#C0C0B4" stroke-width="1"/>
<path d="M703.5 525 L705.5 527.8 L710 523" fill="none" stroke="#000" stroke-width="2.3"/>
<text x="716.6" y="528.8" textLength="37.9" lengthAdjust="spacingAndGlyphs" font-family="Liberation Sans" font-size="10.5" fill="#000">V.Cloudy</text>
<rect x="763" y="520" width="11" height="11" fill="#FFFFFF"/>
<path d="M763.5 531 V520.5 H774" fill="none" stroke="#8C8C80" stroke-width="1"/>
<path d="M764.5 531 V521.5 H774" fill="none" stroke="#C0C0B4" stroke-width="1"/>
<path d="M765.5 525 L767.5 527.8 L772 523" fill="none" stroke="#000" stroke-width="2.3"/>
<text x="778.6" y="528.8" textLength="32.4" lengthAdjust="spacingAndGlyphs" font-family="Liberation Sans" font-size="10.5" fill="#000">V.Windy</text>
<rect x="822" y="520" width="11" height="11" fill="#FFFFFF"/>
<path d="M822.5 531 V520.5 H833" fill="none" stroke="#8C8C80" stroke-width="1"/>
<path d="M823.5 531 V521.5 H833" fill="none" stroke="#C0C0B4" stroke-width="1"/>
<path d="M824.5 525 L826.5 527.8 L831 523" fill="none" stroke="#000" stroke-width="2.3"/>
<text x="838.4" y="528.8" textLength="19.9" lengthAdjust="spacingAndGlyphs" font-family="Liberation Sans" font-size="10.5" fill="#000">Rain</text>
<rect x="867" y="520" width="11" height="11" fill="#FFFFFF"/>
<path d="M867.5 531 V520.5 H878" fill="none" stroke="#8C8C80" stroke-width="1"/>
<path d="M868.5 531 V521.5 H878" fill="none" stroke="#C0C0B4" stroke-width="1"/>
<text x="883.3" y="528.8" textLength="29.3" lengthAdjust="spacingAndGlyphs" font-family="Liberation Sans" font-size="10.5" fill="#000">V.Light</text>
<rect x="893" y="267" width="11" height="11" fill="#FFFFFF"/>
<path d="M893.5 278 V267.5 H904" fill="none" stroke="#8C8C80" stroke-width="1"/>
<path d="M894.5 278 V268.5 H904" fill="none" stroke="#C0C0B4" stroke-width="1"/>
<path d="M895.5 272 L897.5 274.8 L902 270" fill="none" stroke="#000" stroke-width="2.3"/>
<rect x="893" y="304" width="11" height="11" fill="#FFFFFF"/>
<path d="M893.5 315 V304.5 H904" fill="none" stroke="#8C8C80" stroke-width="1"/>
<path d="M894.5 315 V305.5 H904" fill="none" stroke="#C0C0B4" stroke-width="1"/>
<rect x="701" y="557.5" width="11" height="11" fill="#FFFFFF"/>
<path d="M701.5 568.5 V558.0 H712" fill="none" stroke="#8C8C80" stroke-width="1"/>
<path d="M702.5 568.5 V559.0 H712" fill="none" stroke="#C0C0B4" stroke-width="1"/>
<path d="M703.5 562.5 L705.5 565.3 L710 560.5" fill="none" stroke="#000" stroke-width="2.3"/>
<text x="716.6" y="566.4" textLength="25.3" lengthAdjust="spacingAndGlyphs" font-family="Liberation Sans" font-size="10.5" fill="#000">Visual</text>
<rect x="753" y="557.5" width="11" height="11" fill="#FFFFFF"/>
<path d="M753.5 568.5 V558.0 H764" fill="none" stroke="#8C8C80" stroke-width="1"/>
<path d="M754.5 568.5 V559.0 H764" fill="none" stroke="#C0C0B4" stroke-width="1"/>
<text x="769.1" y="566.4" textLength="30.2" lengthAdjust="spacingAndGlyphs" font-family="Liberation Sans" font-size="10.5" fill="#000">Beeper</text>
<rect x="811" y="557.5" width="11" height="11" fill="#FFFFFF"/>
<path d="M811.5 568.5 V558.0 H822" fill="none" stroke="#8C8C80" stroke-width="1"/>
<path d="M812.5 568.5 V559.0 H822" fill="none" stroke="#C0C0B4" stroke-width="1"/>
<text x="826.4" y="566.4" textLength="27.6" lengthAdjust="spacingAndGlyphs" font-family="Liberation Sans" font-size="10.5" fill="#000">Sound</text>
<rect x="866" y="555" width="47" height="16" fill="#E6E6F8"/>
<path d="M866.5 571 V555.5 H913" fill="none" stroke="#FFFFFF" stroke-width="1"/>
<path d="M911.5 556 V571" fill="none" stroke="#8A8A80" stroke-width="2"/>
<text x="876.9" y="566.4" textLength="25.3" lengthAdjust="spacingAndGlyphs" font-family="Liberation Sans" font-size="10.5" fill="#000">Setup</text>
</svg>
</body></html>
